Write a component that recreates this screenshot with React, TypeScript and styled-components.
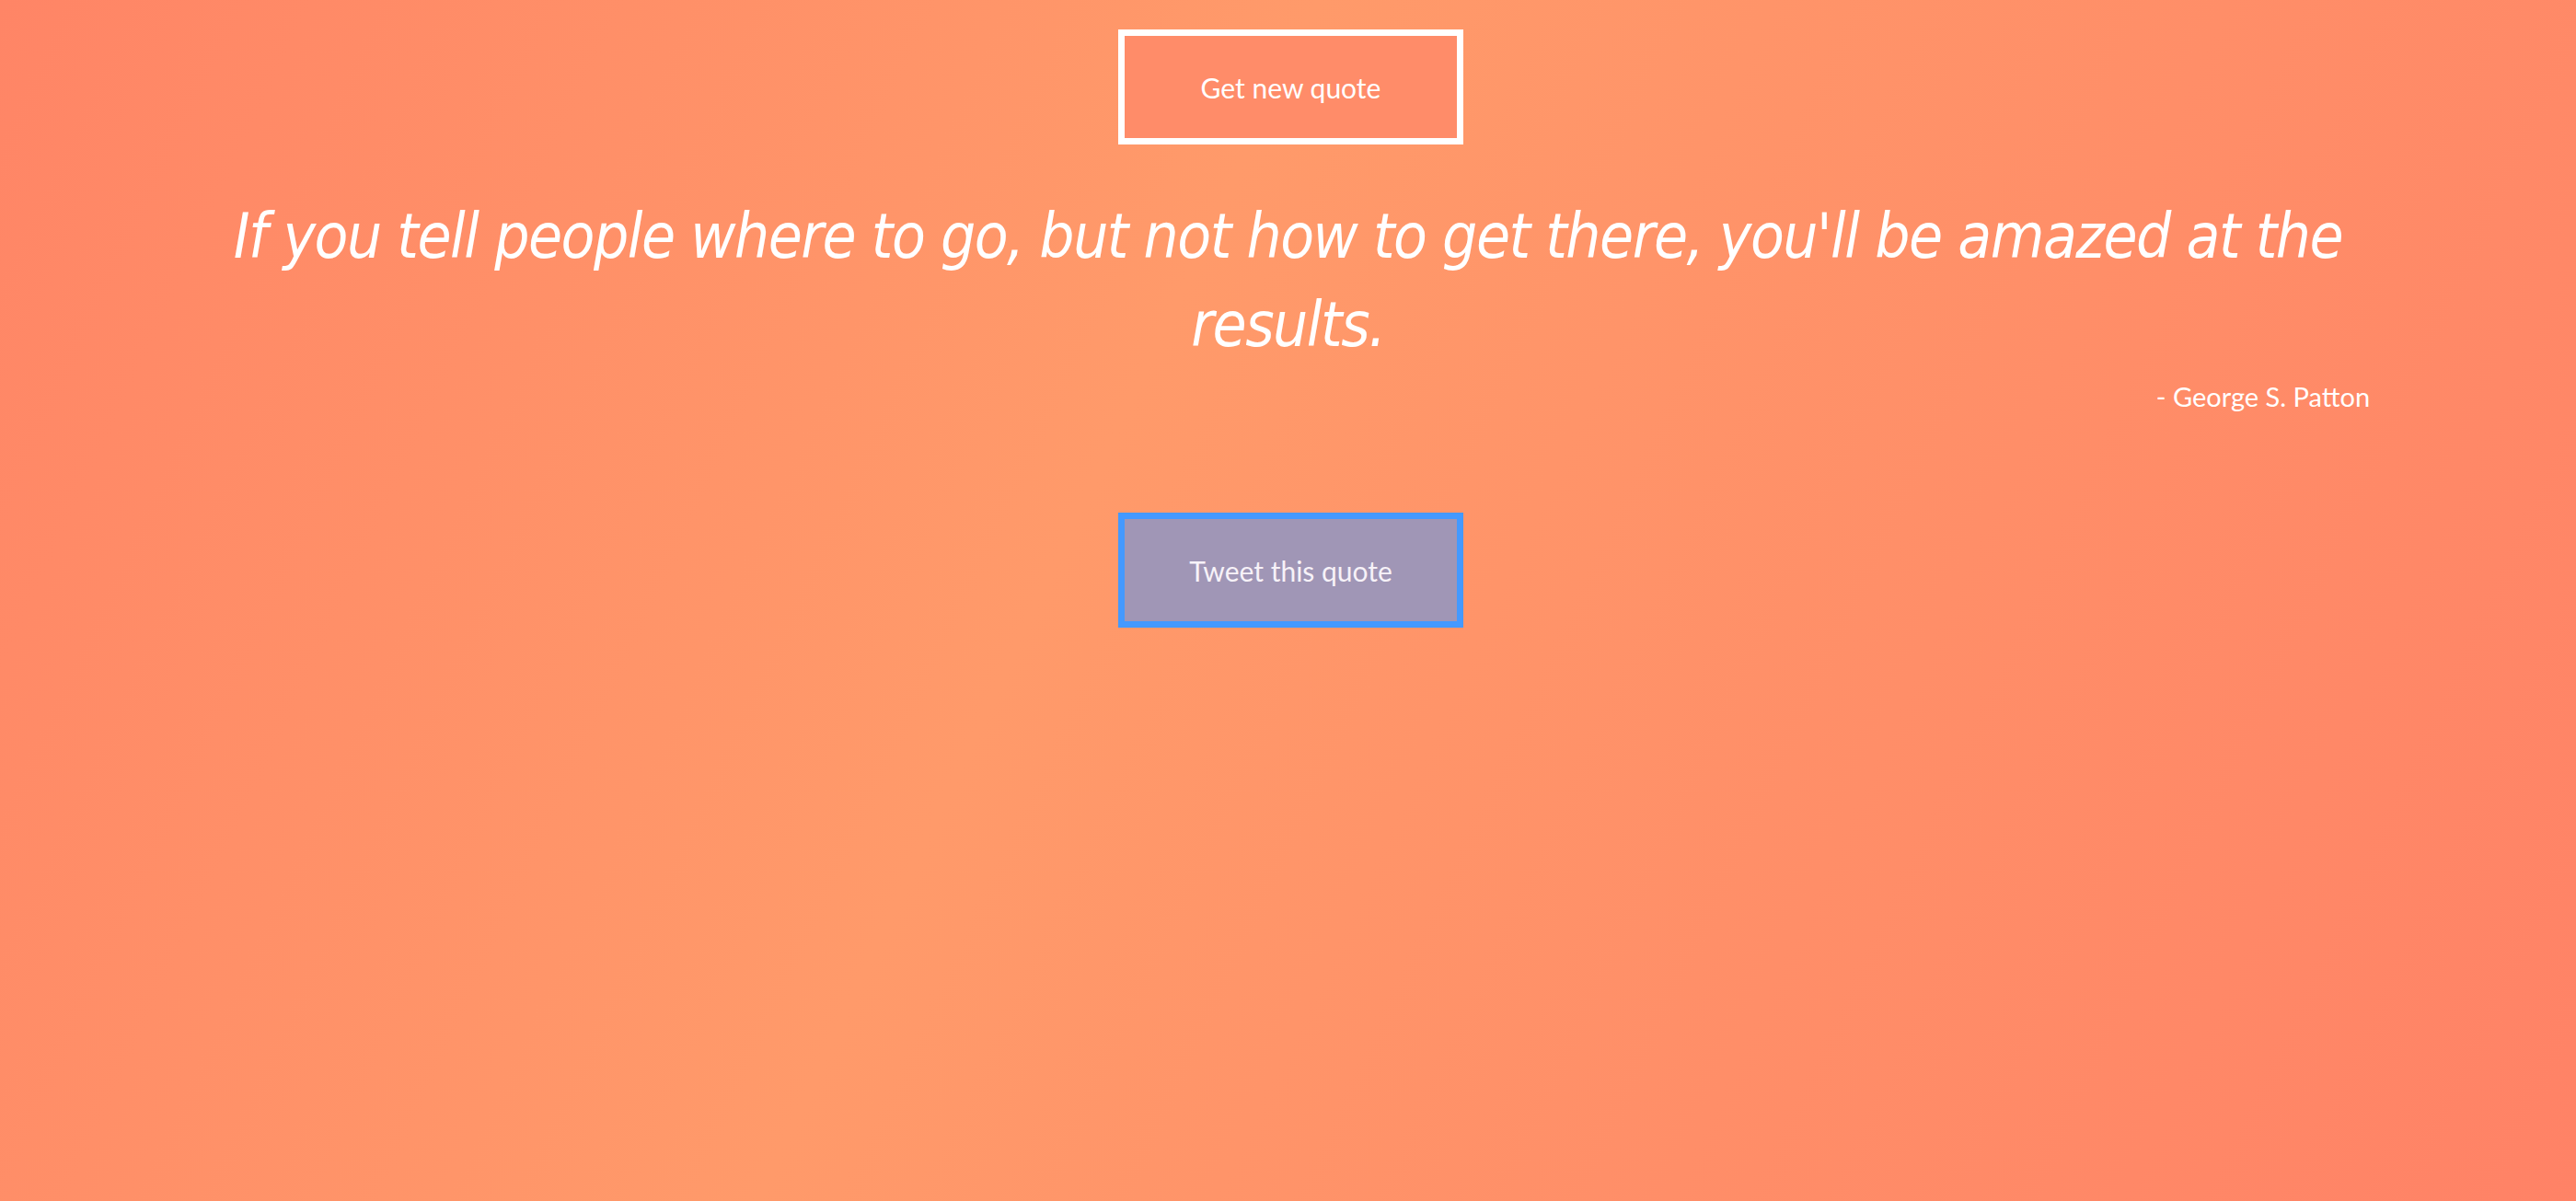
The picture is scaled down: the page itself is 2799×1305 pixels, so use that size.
import React from 'react'
import styled, { createGlobalStyle } from 'styled-components'

const quote = {
  text: "If you tell people where to go, but not how to get there, you'll be amazed at the results.",
  author: 'George S. Patton',
}

export default function App() {
  return (
    <>
      <GlobalStyle />
      <Page>
        <Button>Get new quote</Button>
        <QuoteBox>
          <QuoteText>{quote.text}</QuoteText>
          <Author>- {quote.author}</Author>
        </QuoteBox>
        <Button tweet>Tweet this quote</Button>
      </Page>
    </>
  )
}

const GlobalStyle = createGlobalStyle`
  html, body {
    margin: 0;
    min-height: 100%;
  }

  body {
    min-height: 100vh;
    background: linear-gradient(115deg, #ff8566 0%, #ff9a6a 42%, #ff8266 100%);
    font-family: Lato, 'Open Sans', sans-serif;
    color: #fff;
  }
`

const Page = styled.main`
  min-height: 100vh;
  display: flex;
  flex-direction: column;
  align-items: center;
  padding-top: 32px;
  box-sizing: border-box;
`

const Button = styled.button<{ tweet?: boolean }>`
  width: 375px;
  height: 125px;
  box-sizing: border-box;
  display: flex;
  align-items: center;
  justify-content: center;
  margin: ${(p) => (p.tweet ? '108px' : '0')} 0 0 6px;
  border: 7px solid ${(p) => (p.tweet ? '#4499ff' : '#ffffff')};
  background: ${(p) => (p.tweet ? '#a096b6' : '#ff8c69')};
  color: ${(p) => (p.tweet ? '#f7f2f8' : '#ffffff')};
  font-family: Lato, 'Open Sans', sans-serif;
  font-size: 30px;
  cursor: pointer;
`

const QuoteBox = styled.section`
  width: 84%;
  margin-top: 52px;
  display: flex;
  flex-direction: column;
`

const QuoteText = styled.p`
  margin: 0;
  text-align: center;
  font-family: 'DejaVu Sans Condensed', 'DejaVu Sans', sans-serif;
  font-style: italic;
  font-size: 67px;
  letter-spacing: -1.5px;
  line-height: 96px;
`

const Author = styled.p`
  margin: 12px 0 0;
  text-align: right;
  font-size: 29px;
  line-height: 36px;
`
